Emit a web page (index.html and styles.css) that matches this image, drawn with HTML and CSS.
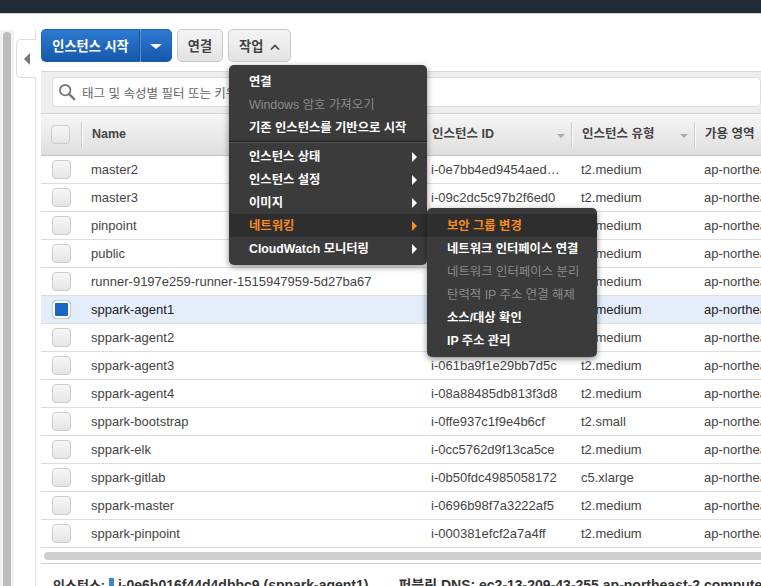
FILE: index.html
```html
<!DOCTYPE html>
<html lang="ko">
<head>
  <meta charset="UTF-8">
  <title>EC2 인스턴스</title>
  <link rel="stylesheet" href="styles.css">
</head>
<body>

<div class="topbar"></div>

<div class="main">
  <div class="page-scroll"><div class="page-thumb"></div></div>

  <div class="side">
    <div class="side-tab"><span class="side-arrow"></span></div>
  </div>

  <div class="content">
    <div class="toolbar">
      <div class="btn-split">
        <button class="btn-blue btn-start">인스턴스 시작</button>
        <button class="btn-blue btn-caret"><span class="caret-down"></span></button>
      </div>
      <button class="btn">연결</button>
      <button class="btn btn-actions">작업
        <svg class="chev" width="10" height="6" viewBox="0 0 10 6"><path d="M1 5.5 L5 1.5 L9 5.5" fill="none" stroke="#444" stroke-width="1.6"/></svg>
      </button>
    </div>

    <div class="search-bar">
      <div class="search-box">
        <svg width="18" height="18" viewBox="0 0 20 20"><circle cx="8" cy="8" r="5.8" fill="none" stroke="#777" stroke-width="2"/><path d="M12.4 12.4 L18 18" stroke="#777" stroke-width="2.6" stroke-linecap="round"/></svg>
        <span>태그 및 속성별 필터 또는 키워드별 검색</span>
      </div>
    </div>

    <div class="table">
      <div class="row head">
        <div class="c-check"><span class="box"></span></div>
        <div class="c-name">Name</div>
        <div class="c-id">인스턴스 ID<i class="sort"></i></div>
        <div class="c-type">인스턴스 유형<i class="sort"></i></div>
        <div class="c-az">가용 영역</div>
      </div>
      <div class="row"><div class="c-check"><span class="box"></span></div><div class="c-name">master2</div><div class="c-id">i-0e7bb4ed9454aed…</div><div class="c-type">t2.medium</div><div class="c-az">ap-northeast-2a</div></div>
      <div class="row"><div class="c-check"><span class="box"></span></div><div class="c-name">master3</div><div class="c-id">i-09c2dc5c97b2f6ed0</div><div class="c-type">t2.medium</div><div class="c-az">ap-northeast-2a</div></div>
      <div class="row"><div class="c-check"><span class="box"></span></div><div class="c-name">pinpoint</div><div class="c-id">i-03ab41c7e2d95f0a1</div><div class="c-type">t2.medium</div><div class="c-az">ap-northeast-2a</div></div>
      <div class="row"><div class="c-check"><span class="box"></span></div><div class="c-name">public</div><div class="c-id">i-0b7d22ea61f4c8d93</div><div class="c-type">t2.medium</div><div class="c-az">ap-northeast-2a</div></div>
      <div class="row"><div class="c-check"><span class="box"></span></div><div class="c-name">runner-9197e259-runner-1515947959-5d27ba67</div><div class="c-id">i-0d14f7b8c3a65e210</div><div class="c-type">t2.medium</div><div class="c-az">ap-northeast-2a</div></div>
      <div class="row selected"><div class="c-check"><span class="box checked"></span></div><div class="c-name">sppark-agent1</div><div class="c-id">i-0e6b016f44d4dbbc9</div><div class="c-type">t2.medium</div><div class="c-az">ap-northeast-2a</div></div>
      <div class="row"><div class="c-check"><span class="box"></span></div><div class="c-name">sppark-agent2</div><div class="c-id">i-07c5e19ab24d8f361</div><div class="c-type">t2.medium</div><div class="c-az">ap-northeast-2a</div></div>
      <div class="row"><div class="c-check"><span class="box"></span></div><div class="c-name">sppark-agent3</div><div class="c-id">i-061ba9f1e29bb7d5c</div><div class="c-type">t2.medium</div><div class="c-az">ap-northeast-2a</div></div>
      <div class="row"><div class="c-check"><span class="box"></span></div><div class="c-name">sppark-agent4</div><div class="c-id">i-08a88485db813f3d8</div><div class="c-type">t2.medium</div><div class="c-az">ap-northeast-2a</div></div>
      <div class="row"><div class="c-check"><span class="box"></span></div><div class="c-name">sppark-bootstrap</div><div class="c-id">i-0ffe937c1f9e4b6cf</div><div class="c-type">t2.small</div><div class="c-az">ap-northeast-2a</div></div>
      <div class="row"><div class="c-check"><span class="box"></span></div><div class="c-name">sppark-elk</div><div class="c-id">i-0cc5762d9f13ca5ce</div><div class="c-type">t2.medium</div><div class="c-az">ap-northeast-2a</div></div>
      <div class="row"><div class="c-check"><span class="box"></span></div><div class="c-name">sppark-gitlab</div><div class="c-id">i-0b50fdc4985058172</div><div class="c-type">c5.xlarge</div><div class="c-az">ap-northeast-2a</div></div>
      <div class="row"><div class="c-check"><span class="box"></span></div><div class="c-name">sppark-master</div><div class="c-id">i-0696b98f7a3222af5</div><div class="c-type">t2.medium</div><div class="c-az">ap-northeast-2a</div></div>
      <div class="row"><div class="c-check"><span class="box"></span></div><div class="c-name">sppark-pinpoint</div><div class="c-id">i-000381efcf2a7a4ff</div><div class="c-type">t2.medium</div><div class="c-az">ap-northeast-2a</div></div>
    </div>

    <div class="h-scroll"><div class="h-thumb"></div></div>

    <div class="detail">
      <span class="detail-label">인스턴스:</span>
      <span class="detail-mark"></span>
      <b>i-0e6b016f44d4dbbc9 (sppark-agent1)</b>
      <span class="detail-label detail-dns">퍼블릭 DNS:</span>
      <b>ec2-13-209-43-255.ap-northeast-2.compute.amazonaws.com</b>
    </div>
  </div>
</div>

<ul class="menu menu-actions">
  <li>연결</li>
  <li class="off">Windows 암호 가져오기</li>
  <li>기존 인스턴스를 기반으로 시작</li>
  <li class="divider"></li>
  <li class="more">인스턴스 상태</li>
  <li class="more">인스턴스 설정</li>
  <li class="more">이미지</li>
  <li class="more on">네트워킹</li>
  <li class="more">CloudWatch 모니터링</li>
</ul>

<ul class="menu menu-network">
  <li class="on">보안 그룹 변경</li>
  <li>네트워크 인터페이스 연결</li>
  <li class="off">네트워크 인터페이스 분리</li>
  <li class="off">탄력적 IP 주소 연결 해제</li>
  <li>소스/대상 확인</li>
  <li>IP 주소 관리</li>
</ul>

</body>
</html>
```

FILE: styles.css
```css
html, body {
  margin: 0;
  padding: 0;
  height: 586px;
  overflow: hidden;
  background: #fff;
  font-family: "Liberation Sans", "Noto Sans CJK KR", sans-serif;
  font-size: 13px;
  color: #444;
}

.topbar {
  height: 13px;
  background: #212b36;
  box-shadow: 0 1px 0 #c9d2d6;
}

.main {
  display: flex;
  height: 573px;
}

.page-scroll {
  width: 14px;
  margin: 17px 2px 0 0;
  padding: 2px 3px 0;
  box-sizing: border-box;
  background: #f1f1f1;
}

.page-thumb {
  width: 8px;
  height: 100%;
  background: #bdbdbd;
  border-radius: 4px 4px 0 0;
}

.side {
  width: 19px;
  margin: 16px 5px 0 0;
  padding-top: 10px;
  border-right: 1px solid #e2e2e2;
}

.side-tab {
  width: 20px;
  height: 39px;
  box-sizing: border-box;
  background: #fff;
  border: 1px solid #ddd;
  border-right: 0;
  border-radius: 5px 0 0 5px;
  display: flex;
  align-items: center;
  justify-content: center;
}

.side-arrow {
  border: 6px solid transparent;
  border-left: 0;
  border-right: 6px solid #777;
}

.content {
  flex: 1;
  min-width: 0;
  overflow: hidden;
  padding-top: 16px;
}

.toolbar {
  display: flex;
  gap: 5px;
  height: 33px;
  margin-bottom: 9px;
}

button {
  font-family: inherit;
  font-size: 13.2px;
  font-weight: bold;
  padding: 0;
  height: 33px;
  cursor: pointer;
}

.btn-split {
  display: flex;
}

.btn-blue {
  color: #fff;
  background: linear-gradient(#2f7bd2, #1458ab);
  border: 1px solid #1a5fb0;
}

.btn-start {
  width: 99px;
  border-right-color: #15508f;
  border-radius: 5px 0 0 5px;
}

.btn-caret {
  width: 32px;
  border-left: 1px solid #5a93d6;
  border-radius: 0 5px 5px 0;
}

.caret-down {
  display: inline-block;
  border: 6px solid transparent;
  border-bottom: 0;
  border-top: 5px solid #fff;
  vertical-align: middle;
}

.btn {
  width: 46px;
  color: #444;
  background: linear-gradient(#f4f4f4, #e3e3e3);
  border: 1px solid #c8c8c8;
  border-radius: 5px;
}

.btn-actions {
  width: 63px;
}

.chev {
  margin-left: 3px;
  vertical-align: 1px;
}

.search-bar {
  height: 42px;
  box-sizing: border-box;
  background: #eee;
  border-top: 1px solid #d8d8d8;
  padding: 5px 0 0 11px;
}

.search-box {
  height: 30px;
  box-sizing: border-box;
  background: #fff;
  border: 1px solid #ddd;
  border-radius: 4px;
  display: flex;
  align-items: center;
  gap: 6px;
  padding-left: 5px;
  font-size: 12.5px;
  color: #666;
  white-space: nowrap;
}

.table {
  width: 800px;
}

.row {
  display: flex;
  height: 28px;
  box-sizing: border-box;
  border-bottom: 1px solid #ddd;
  align-items: center;
  white-space: nowrap;
}

.row.head {
  height: 43px;
  border-top: 1px solid #d4d4d4;
  border-bottom: 1px solid #c4c4c4;
  background: linear-gradient(#f6f6f6, #dedede);
  font-size: 12.5px;
  font-weight: bold;
  color: #444;
}

.row.selected {
  background: #e4eefa;
  color: #222;
}

.c-check {
  width: 50px;
  box-sizing: border-box;
  padding-left: 11px;
  display: flex;
}

.head .c-check {
  padding-left: 10px;
}

.c-name {
  width: 340px;
}

.c-id {
  width: 150px;
}

.c-type {
  width: 123px;
}

.c-az {
  flex: 1;
}

.head .c-name,
.head .c-id,
.head .c-type,
.head .c-az {
  position: relative;
  box-sizing: border-box;
  height: 18px;
  line-height: 16px;
  padding-left: 1px;
}

.head .c-name::before,
.head .c-type::before,
.head .c-az::before {
  content: "";
  position: absolute;
  left: -10px;
  top: -4px;
  width: 1px;
  height: 26px;
  background: #ccc;
  box-shadow: 1px 0 0 #fafafa;
}

.sort {
  position: absolute;
  right: 16px;
  top: 8px;
  border: 4px solid transparent;
  border-bottom: 0;
  border-top: 4px solid #aaa;
}

.box {
  width: 17px;
  height: 17px;
  background: linear-gradient(#f6f6f6, #e6e6e6);
  border: 1px solid #ccc;
  border-radius: 4px;
  display: block;
}

.box.checked {
  background: #1b66c0;
  box-shadow: inset 0 0 0 2px #fff;
}

.h-scroll {
  height: 16px;
  box-sizing: border-box;
  padding-top: 4px;
  border-bottom: 1px solid #ccc;
}

.h-thumb {
  height: 8px;
  margin-left: 3px;
  background: #cfcfcf;
  border-radius: 4px 0 0 4px;
}

.detail {
  padding: 10px 0 0 12px;
  white-space: nowrap;
  font-size: 14px;
  color: #333;
}

.detail-label {
  font-size: 13px;
  font-weight: bold;
}

.detail-mark {
  display: inline-block;
  width: 5px;
  height: 14px;
  background: #3f86d1;
  vertical-align: -2px;
}

.detail-dns {
  margin-left: 26px;
  font-size: 14px;
}

.menu {
  position: absolute;
  margin: 0;
  padding: 5px 0;
  list-style: none;
  background: #3b3b3b;
  border-radius: 5px;
  box-shadow: 0 2px 6px rgba(0, 0, 0, 0.45);
  color: #fff;
  font-size: 12.3px;
  font-weight: bold;
  white-space: nowrap;
}

.menu li {
  height: 23px;
  line-height: 25px;
  padding-left: 20px;
}

.menu li.off {
  color: #8a8a8a;
  font-size: 12.4px;
  font-weight: normal;
}

.menu li.on {
  color: #f58a1f;
  background: #2e2e2e;
}

.menu li.divider {
  height: 0;
  margin: 2px 0;
  padding: 0;
  border-top: 1px solid #1e1e1e;
  border-bottom: 1px solid #555;
}

.menu li.more {
  position: relative;
}

.menu li.more::after {
  content: "";
  position: absolute;
  right: 10px;
  top: 7px;
  border: 5px solid transparent;
  border-right: 0;
  border-left: 5px solid #fff;
}

.menu li.more.on::after {
  border-left-color: #f58a1f;
}

.menu-actions {
  left: 229px;
  top: 65px;
  width: 198px;
}

.menu-network {
  left: 427px;
  top: 208px;
  width: 170px;
  padding-top: 6px;
}
```
